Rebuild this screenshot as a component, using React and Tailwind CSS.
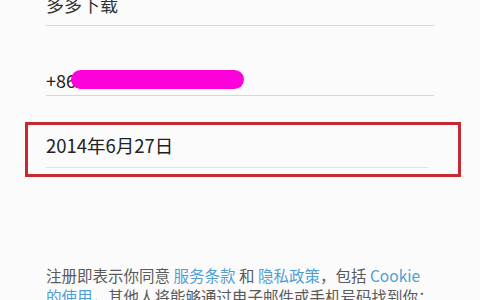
import React from "react";

function App() {
    return (
        <div
            className="w-[480px] h-[300px] overflow-hidden bg-[#fbfbfb] relative"
            style={{ fontFamily: '"Noto Sans CJK SC", "Noto Sans", sans-serif' }}
        >
            {/* Name field */}
            <div className="mx-[46px] -mt-[6px] h-[32px] border-b border-[#d6d6d6] flex items-start">
                <span className="text-[18px] text-[#333] leading-[20px]">多多下载</span>
            </div>

            {/* Phone field */}
            <div className="mx-[46px] mt-[38px] h-[32px] border-b border-[#d6d6d6] flex items-center">
                <span className="text-[18px] text-[#222] leading-none">+86</span>
                <span className="-ml-[5px] w-[173px] h-[19px] rounded-full bg-[#ff00dc]"></span>
            </div>

            {/* Birthday field, highlighted */}
            <div className="ml-[25px] mr-[19px] mt-[26px] h-[55px] border-[3px] border-[#c62a30] pl-[18px] pr-[30px] pt-[9px]">
                <div className="h-[34px] border-b border-[#e2e2e2] flex items-start">
                    <span className="text-[18.5px] text-[#222] leading-[22px]">2014年6月27日</span>
                </div>
            </div>

            {/* Terms */}
            <p className="mx-[46px] mt-[88px] text-[15.5px] leading-[21px] text-[#5a5a5a]">
                注册即表示你同意 <span className="text-[#4f9fd4]">服务条款</span> 和{" "}
                <span className="text-[#4f9fd4]">隐私政策</span>，包括 <span className="text-[#4f9fd4]">Cookie</span>
                <br />
                <span className="text-[#4f9fd4]">的使用</span>，其他人将能够通过电子邮件或手机号码找到你；
            </p>
        </div>
    );
}

export default App;
